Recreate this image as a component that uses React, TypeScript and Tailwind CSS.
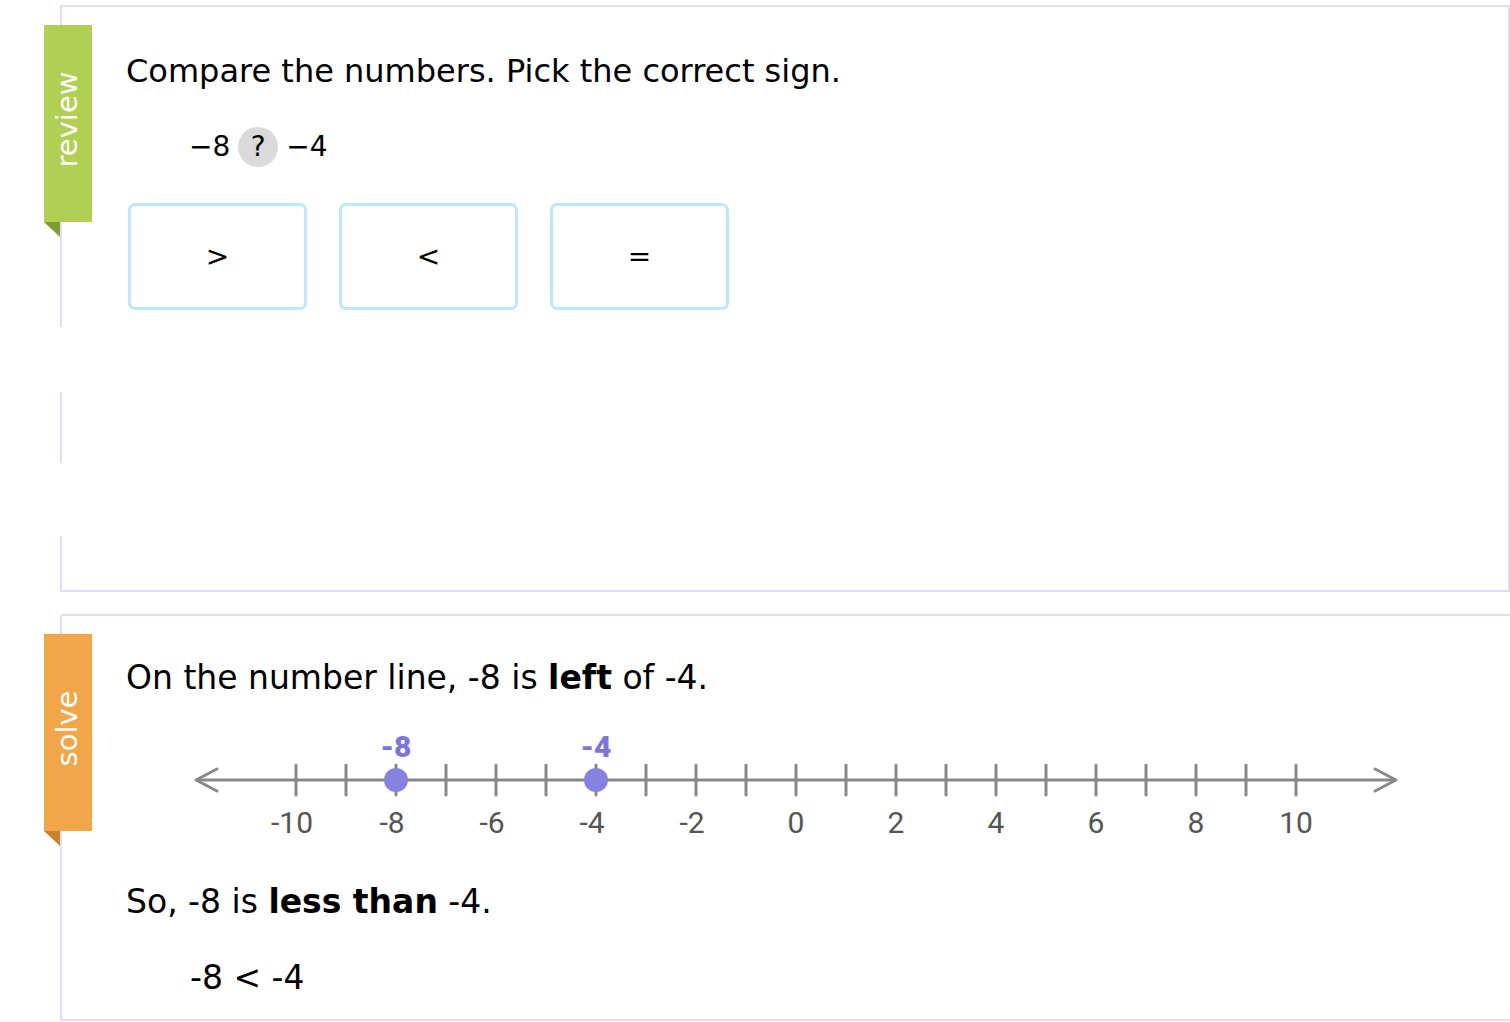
import React from "react"

function Ribbon({ label, bg, fold }: { label: string; bg: string; fold: string }) {
  return (
    <div className="absolute left-[-18px] top-[18px] z-10">
      <div className={`w-[48px] h-[197px] pb-[8px] flex items-center justify-center ${bg}`}>
        <span className="-rotate-90 text-white text-[29px] font-['DejaVu_Sans',sans-serif] whitespace-nowrap leading-none">
          {label}
        </span>
      </div>
      <div className={`w-[16px] h-[15px] ${fold} [clip-path:polygon(0_0,100%_0,100%_100%)]`} />
    </div>
  )
}

function NumberLine() {
  const ticks = Array.from({ length: 21 }, (_, i) => i - 10)
  const x = (v: number) => 796 + v * 50
  return (
    <svg width="1440" height="110" viewBox="62 730 1440 110" className="block">
      <line x1="196" y1="780" x2="1396" y2="780" stroke="#888" strokeWidth="3" />
      <polyline points="217,769 196,780 217,791" fill="none" stroke="#888" strokeWidth="3" strokeLinecap="round" strokeLinejoin="round" />
      <polyline points="1375,769 1396,780 1375,791" fill="none" stroke="#888" strokeWidth="3" strokeLinecap="round" strokeLinejoin="round" />
      {ticks.map((v) => (
        <line key={v} x1={x(v)} y1="765" x2={x(v)} y2="795" stroke="#888" strokeWidth="3" strokeLinecap="round" />
      ))}
      {ticks
        .filter((v) => v % 2 === 0)
        .map((v) => (
          <text key={v} x={x(v) - (v < 0 ? 4 : 0)} y="833" textAnchor="middle" fontFamily="Roboto, sans-serif" fontSize="30" fill="#555">
            {v}
          </text>
        ))}
      {[-8, -4].map((v) => (
        <g key={v}>
          <circle cx={x(v)} cy="780" r="12" fill="#8782e0" />
          <text x={x(v)} y="757" textAnchor="middle" fontFamily="Roboto, sans-serif" fontWeight="900" fontSize="30" fill="#7c76d6">
            {v}
          </text>
        </g>
      ))}
    </svg>
  )
}

export default function App() {
  return (
    <div className="min-h-screen bg-white pt-[5px] pl-[60px] font-['DejaVu_Sans',sans-serif] text-black">
      {/* review panel */}
      <div className="relative h-[587px] border-2 border-[#e0dcf8] border-l-transparent rounded-l-[3px]">
        <div className="absolute left-[-2px] top-[-2px] bottom-[-2px] w-[2px] flex flex-col">
          <div className="h-[322px] bg-[#e0dcf8]" />
          <div className="h-[65px]" />
          <div className="h-[71px] bg-[#e0dcf8]" />
          <div className="h-[73px]" />
          <div className="flex-1 bg-[#e0dcf8]" />
        </div>
        <Ribbon label="review" bg="bg-[#b1cf53]" fold="bg-[#7f9b36]" />
        <div className="pl-[64px] pt-[44px]">
          <p className="text-[32px] leading-[40px]">Compare the numbers. Pick the correct sign.</p>
          <div className="mt-[34px] ml-[63px] flex items-center text-[28px] h-[44px]">
            <span>−8</span>
            <span className="mx-[8px] w-[40px] h-[40px] rounded-full bg-[#dadada] flex items-center justify-center">?</span>
            <span>−4</span>
          </div>
          <div className="mt-[34px] ml-[2px] flex gap-[32px]">
            {[">", "<", "="].map((s) => (
              <div key={s} className="w-[179px] h-[107px] border-[3px] border-[#bde8fb] rounded-[7px] flex items-center justify-center text-[28px]">
                {s}
              </div>
            ))}
          </div>
        </div>
      </div>

      {/* solve panel */}
      <div className="relative mt-[22px] h-[407px] border-2 border-r-0 border-[#e0dcf8] rounded-l-[3px]">
        <Ribbon label="solve" bg="bg-[#f0a649]" fold="bg-[#c8832c]" />
        <div className="pl-[64px] pt-[42px]">
          <p className="text-[33px] leading-[40px]">
            On the number line, -8 is <b>left</b> of -4.
          </p>
          <div className="mt-[32px] ml-[-64px]">
            <NumberLine />
          </div>
          <p className="mt-[42px] text-[33px] leading-[40px]">
            So, -8 is <b>less than</b> -4.
          </p>
          <p className="mt-[36px] ml-[64px] text-[33px] leading-[40px]">-8 &lt; -4</p>
        </div>
      </div>
    </div>
  )
}
